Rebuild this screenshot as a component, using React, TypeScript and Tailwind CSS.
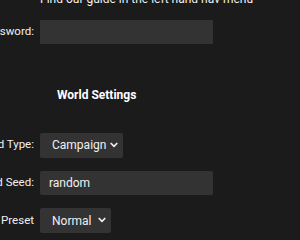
import React from "react";

const Chevron = () => (
  <svg width="8" height="6" viewBox="0 0 8 6" className="pointer-events-none absolute right-[5px] top-1/2 -translate-y-1/2">
    <path d="M1.2 1.5 L4 4.3 L6.8 1.5" fill="none" stroke="#ededed" strokeWidth="1.7" strokeLinecap="round" strokeLinejoin="round" />
  </svg>
);

const Label = ({ children }: { children: React.ReactNode }) => (
  <div className="flex w-[34px] justify-end whitespace-nowrap text-[11.5px] text-[#f0f0f0]">{children}</div>
);

export default function App() {
  return (
    <div
      className="h-[240px] w-[300px] overflow-hidden bg-[#1b1b1b] text-[#f0f0f0]"
      style={{ fontFamily: 'Roboto, "Noto Sans", sans-serif' }}
    >
      <div className="-mt-[10px] pl-[40px] text-[12px] leading-[18px] whitespace-nowrap">Find our guide in the left hand nav menu</div>
      <div className="mt-[12px] flex items-center gap-[6px]">
        <Label>Server Password:</Label>
        <input className="h-[24px] w-[173px] bg-[#333333] px-[9px] text-[12px] text-[#f0f0f0] outline-none" />
      </div>
      <div className="mt-[40px] pl-[57px] text-[12px] font-bold leading-[22px] text-white">World Settings</div>
      <div className="mt-[26px] flex items-center gap-[6px]">
        <Label>World Type:</Label>
        <div className="relative">
          <select className="h-[25px] w-[83px] appearance-none rounded-[2px] bg-[#333333] pl-[12px] pr-[2px] text-[12px] text-[#f0f0f0] outline-none">
            <option>Campaign</option>
          </select>
          <Chevron />
        </div>
      </div>
      <div className="mt-[13px] flex items-center gap-[6px]">
        <Label>World Seed:</Label>
        <input
          defaultValue="random"
          className="h-[24px] w-[173px] rounded-[2px] bg-[#333333] px-[9px] text-[12px] text-[#f0f0f0] outline-none"
        />
      </div>
      <div className="mt-[13px] flex items-center gap-[6px]">
        <Label>Server Preset</Label>
        <div className="relative">
          <select className="h-[25px] w-[71px] appearance-none rounded-[2px] bg-[#333333] pl-[12px] pr-[2px] text-[12px] text-[#f0f0f0] outline-none">
            <option>Normal</option>
          </select>
          <Chevron />
        </div>
      </div>
    </div>
  );
}
